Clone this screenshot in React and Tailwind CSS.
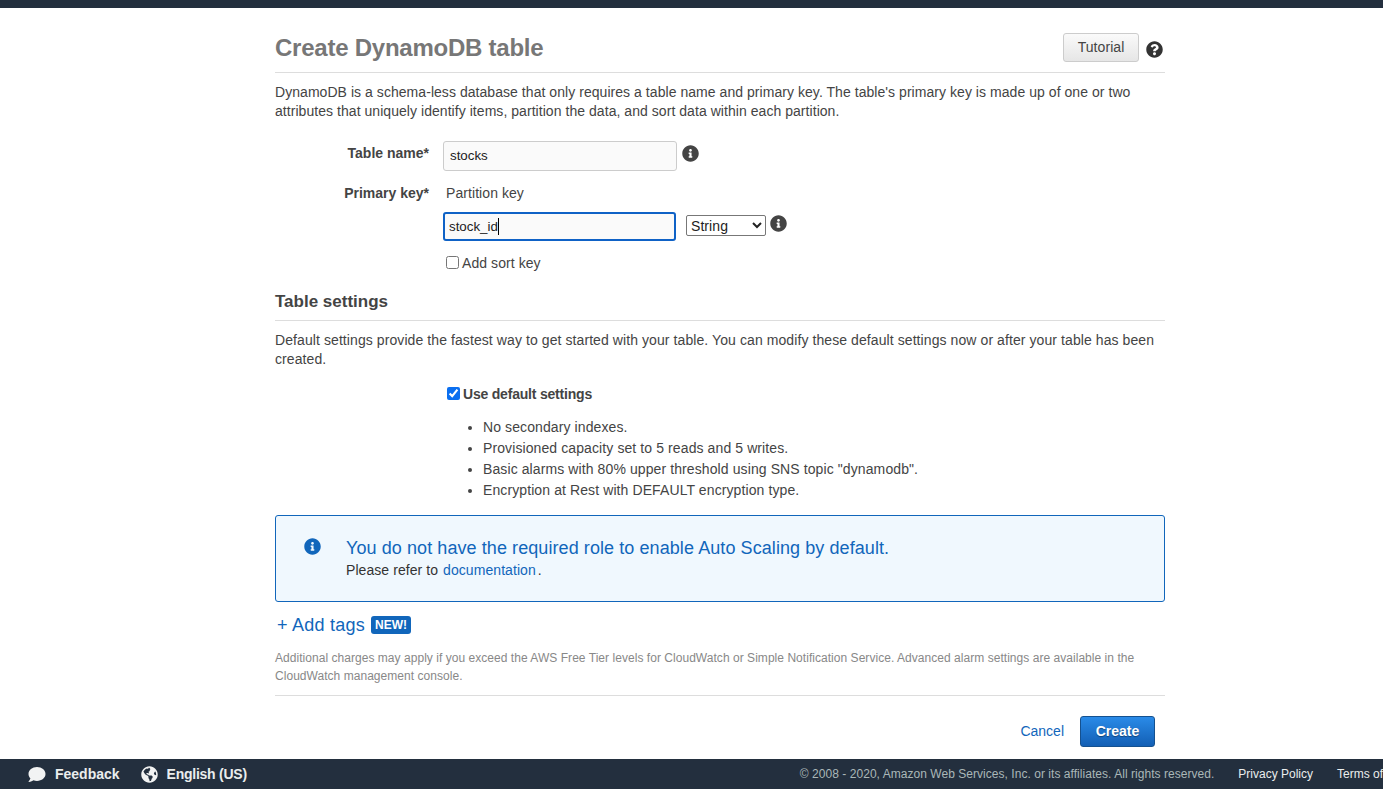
import React from "react";
import { FaInfoCircle, FaQuestionCircle, FaComment, FaGlobeAmericas } from "react-icons/fa";

const bullets = [
  "No secondary indexes.",
  "Provisioned capacity set to 5 reads and 5 writes.",
  'Basic alarms with 80% upper threshold using SNS topic "dynamodb".',
  "Encryption at Rest with DEFAULT encryption type.",
];

export default function App() {
  return (
    <div className="h-[789px] w-[1383px] overflow-hidden flex flex-col bg-white text-[14px] leading-[19px] tracking-[0.07px] text-[#444] font-['Liberation_Sans',Arial,sans-serif]">
      <div className="h-2 bg-[#232f3e] shrink-0" />
      <main className="flex-1 min-h-0 pl-[275px] pr-[218px]">
        <header className="h-[65px] flex items-start justify-between border-b border-[#ddd]">
          <h1 className="mt-[25px] text-[24px] leading-[30px] font-bold tracking-[-0.24px] text-[#777]">Create DynamoDB table</h1>
          <div className="flex items-center mt-[25px] mr-[2px]">
            <button className="w-[76px] h-[29px] rounded-[3px] border border-[#ccc] bg-gradient-to-b from-[#fafafa] to-[#e6e6e6] text-[14px] text-[#444]">Tutorial</button>
            <FaQuestionCircle className="ml-[7px] mt-[3px] w-[17px] h-[17px] text-[#333]" />
          </div>
        </header>

        <p className="mt-[10px] tracking-[0.05px]">
          DynamoDB is a schema-less database that only requires a table name and primary key. The table's primary key is made up of one or two attributes that uniquely identify items, partition the data, and sort data within each partition.
        </p>

        <div className="mt-[20px] flex">
          <label className="w-[154px] text-right font-bold tracking-normal pt-[3px]">Table name*</label>
          <input defaultValue="stocks" className="ml-[14px] w-[234px] h-[30px] px-[6px] pb-[2px] rounded-[3px] border border-[#ccc] bg-[#fafafa] text-[13.33px] tracking-normal text-[#222] outline-none" />
          <FaInfoCircle className="ml-[5px] mt-[4px] w-[17px] h-[17px] text-[#444]" />
        </div>

        <div className="mt-[13px] flex">
          <label className="w-[154px] text-right font-bold tracking-normal">Primary key*</label>
          <span className="ml-[17px]">Partition key</span>
        </div>

        <div className="mt-[9px] ml-[168px] flex items-start">
          <div className="relative">
            <input defaultValue="stock_id" className="block w-[233px] h-[29px] px-[4px] rounded-[3px] border-2 border-[#0f62c6] bg-[#fafafa] text-[13.33px] tracking-normal text-[#222] outline-none" />
            <span className="absolute left-[55px] top-[6px] w-px h-[17px] bg-black" />
          </div>
          <select className="ml-[10px] mt-[3px] w-[80px] h-[21px] pl-0 rounded-[2px] border border-[#777] bg-white text-[14px] text-[#222]">
            <option>String</option>
          </select>
          <FaInfoCircle className="ml-[4px] mt-[3px] w-[17px] h-[17px] text-[#444]" />
        </div>

        <label className="mt-[13px] ml-[171px] flex items-center">
          <input type="checkbox" className="w-[13px] h-[13px] m-0 -translate-y-px" />
          <span className="ml-[3px]">Add sort key</span>
        </label>

        <h2 className="mt-[19px] pb-[8px] border-b border-[#ddd] text-[17px] leading-[20px] font-bold tracking-normal text-[#444]">Table settings</h2>

        <p className="mt-[10px] tracking-[0.085px]">
          Default settings provide the fastest way to get started with your table. You can modify these default settings now or after your table has been created.
        </p>

        <label className="mt-[16px] ml-[172px] flex items-center">
          <input type="checkbox" defaultChecked className="w-[13px] h-[13px] m-0 -translate-y-px accent-[#0b6ff0]" />
          <span className="ml-[3px] font-bold tracking-[-0.2px]">Use default settings</span>
        </label>

        <ul className="mt-[13px] ml-[208px] list-disc leading-[21px] tracking-[0.1px]">
          {bullets.map((b) => (
            <li key={b}>{b}</li>
          ))}
        </ul>

        <section className="mt-[14px] h-[87px] rounded-[3px] border border-[#1166bb] bg-[#f0f8fe] flex">
          <FaInfoCircle className="ml-[28px] mt-[22px] w-[17px] h-[17px] text-[#1166bb] shrink-0" />
          <div className="ml-[25px] mt-[21px]">
            <div className="text-[18px] leading-[22px] tracking-[0.08px] text-[#1166bb]">You do not have the required role to enable Auto Scaling by default.</div>
            <div className="mt-[2px] text-[14px] text-[#333]">
              Please refer to <a className="ml-[1px] text-[#1166bb]">documentation</a><span className="ml-[2px]">.</span>
            </div>
          </div>
        </section>

        <div className="mt-[12px] ml-[2px] flex items-center">
          <a className="text-[18px] leading-[22px] tracking-[0.25px] text-[#1166bb]">+ Add tags</a>
          <span className="ml-[6px] px-[4px] h-[18px] rounded-[3px] bg-[#1166bb] text-white text-[12px] leading-[18px] font-bold tracking-normal">NEW!</span>
        </div>

        <p className="mt-[13px] pb-[10px] border-b border-[#ddd] text-[12px] leading-[18px] tracking-[0.04px] text-[#888]">
          Additional charges may apply if you exceed the AWS Free Tier levels for CloudWatch or Simple Notification Service. Advanced alarm settings are available in the CloudWatch management console.
        </p>

        <div className="mt-[20px] flex justify-end items-center pr-[10px]">
          <a className="text-[14px] tracking-normal text-[#1166bb]">Cancel</a>
          <button className="ml-[16px] w-[75px] h-[31px] rounded-[3px] border border-[#15518f] bg-gradient-to-b from-[#2a8be8] to-[#135fb5] text-white text-[14px] font-bold tracking-normal [text-shadow:0_1px_1px_rgba(0,0,0,0.4)]">Create</button>
        </div>
      </main>

      <footer className="h-[30px] shrink-0 bg-[#232f3e] flex items-center text-[14px] tracking-normal whitespace-nowrap overflow-hidden">
        <FaComment className="ml-[28px] w-[18px] h-[17px] text-[#f2f3f3]" />
        <span className="ml-[9px] font-bold text-[#eaeded]">Feedback</span>
        <FaGlobeAmericas className="ml-[21px] w-[17px] h-[17px] text-[#f2f3f3]" />
        <span className="ml-[9px] font-bold tracking-[-0.25px] text-[#eaeded]">English (US)</span>
        <span className="ml-auto text-[12px] tracking-[0.04px] text-[#aab7b8]">© 2008 - 2020, Amazon Web Services, Inc. or its affiliates. All rights reserved.</span>
        <span className="ml-[24px] text-[12px] text-[#eaeded]">Privacy Policy</span>
        <span className="ml-[24px] w-[46px] shrink-0 text-[12px] text-[#eaeded]">Terms of</span>
      </footer>
    </div>
  );
}
